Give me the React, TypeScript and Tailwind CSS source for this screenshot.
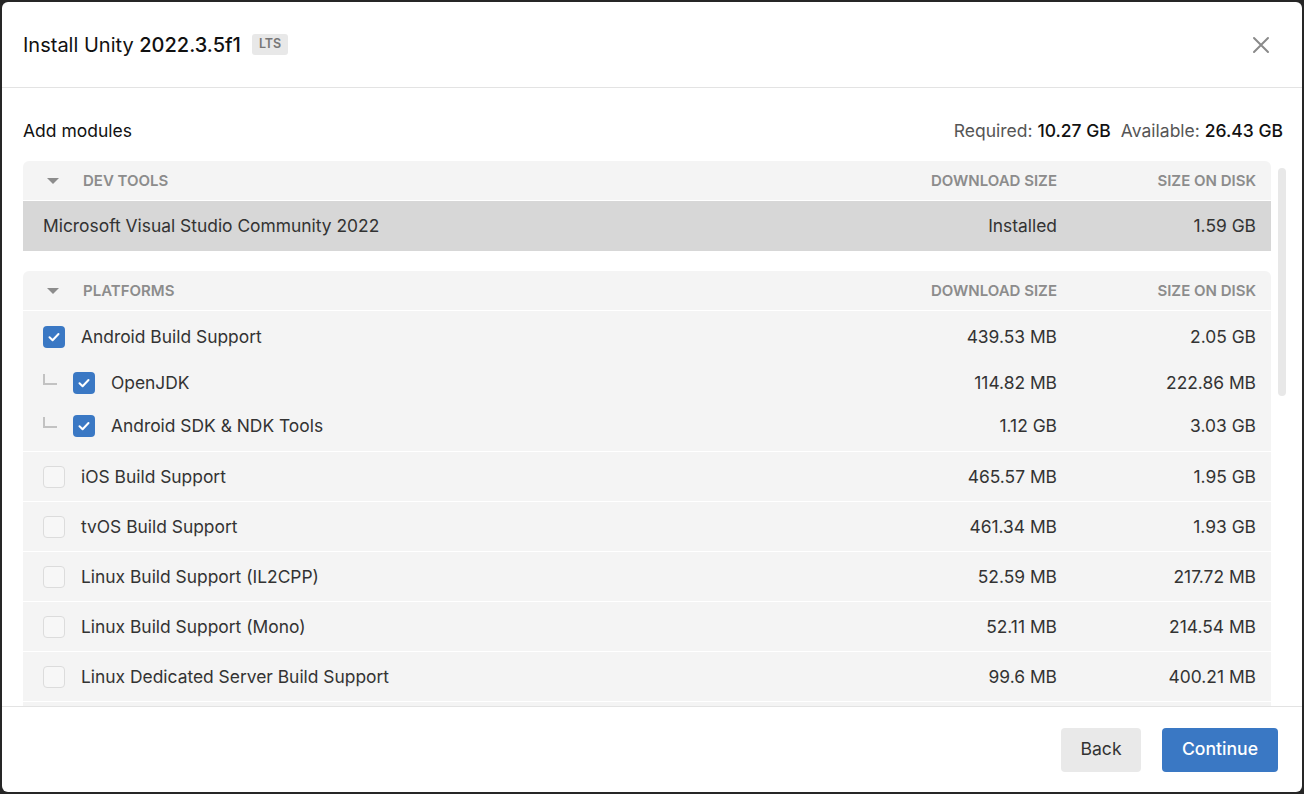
import React from 'react';

type Row = {
	name: string;
	download: string;
	disk: string;
	checked?: boolean;
	children?: { name: string; download: string; disk: string }[];
};

const platforms: Row[] = [
	{
		name: 'Android Build Support',
		download: '439.53 MB',
		disk: '2.05 GB',
		checked: true,
		children: [
			{ name: 'OpenJDK', download: '114.82 MB', disk: '222.86 MB' },
			{ name: 'Android SDK & NDK Tools', download: '1.12 GB', disk: '3.03 GB' },
		],
	},
	{ name: 'iOS Build Support', download: '465.57 MB', disk: '1.95 GB' },
	{ name: 'tvOS Build Support', download: '461.34 MB', disk: '1.93 GB' },
	{ name: 'Linux Build Support (IL2CPP)', download: '52.59 MB', disk: '217.72 MB' },
	{ name: 'Linux Build Support (Mono)', download: '52.11 MB', disk: '214.54 MB' },
	{ name: 'Linux Dedicated Server Build Support', download: '99.6 MB', disk: '400.21 MB' },
];

const Checkbox = ({ checked }: { checked?: boolean }) =>
	checked ? (
		<span className="flex h-[22px] w-[22px] shrink-0 items-center justify-center rounded-[4px] bg-[#3a78c4]">
			<svg width="14" height="14" viewBox="0 0 14 14" fill="none">
				<path d="M2.5 7.3 5.6 10.2 11.5 4" stroke="white" strokeWidth="2" strokeLinecap="round" strokeLinejoin="round" />
			</svg>
		</span>
	) : (
		<span className="block h-[22px] w-[22px] shrink-0 rounded-[4px] border border-[#dcdcdc] bg-[#f7f7f7]" />
	);

const SectionHeader = ({ title }: { title: string }) => (
	<div className="flex h-[40px] items-center border-b border-white pr-[15px] text-[15px] font-semibold uppercase text-[#8c8c8c]">
		<span className="ml-[24px] mr-[24px] block h-0 w-0 border-x-[6px] border-t-[6px] border-x-transparent border-t-[#8c8c8c]" />
		<span className="flex-1">{title}</span>
		<span className="w-[200px] text-right">Download size</span>
		<span className="w-[199px] text-right">Size on disk</span>
	</div>
);

const Sizes = ({ download, disk }: { download: string; disk: string }) => (
	<>
		<span className="w-[200px] text-right">{download}</span>
		<span className="w-[199px] text-right">{disk}</span>
	</>
);

export default function App() {
	return (
		<div className="h-[794px] w-full bg-[#262626] p-[2px] font-['Inter',sans-serif] text-[#333]">
			<div className="flex h-full flex-col overflow-hidden rounded-[6px] bg-white">
				<div className="flex h-[86px] shrink-0 items-center border-b border-[#e3e3e3] pl-[21px] pr-[32px]">
					<h1 className="text-[20px] text-[#111]">
						Install Unity <span className="font-medium">2022.3.5f1</span>
					</h1>
					<span className="ml-[11px] rounded-[3px] bg-[#e8e8e8] px-[7px] py-[1px] text-[12.5px] font-semibold text-[#777]">
						LTS
					</span>
					<span className="flex-1" />
					<svg width="18" height="18" viewBox="0 0 18 18" fill="none">
						<path d="M2 2 16 16 M16 2 2 16" stroke="#8a8a8a" strokeWidth="2" strokeLinecap="round" />
					</svg>
				</div>

				<div className="flex min-h-0 flex-1 flex-col overflow-hidden">
					<div className="flex shrink-0 items-center justify-between pl-[21px] pr-[19px] pt-[30px] text-[17.5px]">
						<span className="text-[#111]">Add modules</span>
						<span className="text-[#555]">
							Required: <span className="font-medium text-[#111]">10.27 GB</span>
							<span className="ml-[10px]">Available: </span>
							<span className="font-medium text-[#111]">26.43 GB</span>
						</span>
					</div>

					<div className="mt-[17px] flex min-h-0 flex-1 gap-[7px] pl-[21px] pr-[16px]">
						<div className="flex min-w-0 flex-1 flex-col gap-[20px] text-[17.4px]">
							<div className="shrink-0 overflow-hidden rounded-t-[6px] bg-[#f4f4f4]">
								<SectionHeader title="Dev tools" />
								<div className="flex h-[50px] items-center bg-[#d7d7d7] pl-[20px] pr-[15px]">
									<span className="flex-1">Microsoft Visual Studio Community 2022</span>
									<Sizes download="Installed" disk="1.59 GB" />
								</div>
							</div>

							<div className="shrink-0 rounded-t-[6px] bg-[#f4f4f4]">
								<SectionHeader title="Platforms" />
								{platforms.map((p) => (
									<div key={p.name} className={`border-b border-white ${p.children ? 'pb-[4px] pt-[2px]' : ''}`}>
										<div className={`flex items-center pl-[20px] pr-[15px] ${p.children ? 'h-[48px]' : 'h-[49px]'}`}>
											<Checkbox checked={p.checked} />
											<span className="ml-[16px] flex-1">{p.name}</span>
											<Sizes download={p.download} disk={p.disk} />
										</div>
										{p.children?.map((c) => (
											<div key={c.name} className="flex h-[43px] items-center pl-[20px] pr-[15px]">
												<span className="mb-[6px] mr-[16px] block h-[11px] w-[14px] border-b-2 border-l-2 border-[#c2c2c2]" />
												<Checkbox checked />
												<span className="ml-[16px] flex-1">{c.name}</span>
												<Sizes download={c.download} disk={c.disk} />
											</div>
										))}
									</div>
								))}
								<div className="h-[40px]" />
							</div>
						</div>
						<div className="w-[8px] shrink-0 pt-[7px]">
							<div className="h-[228px] rounded-full bg-[#e8e8e8]" />
						</div>
					</div>
				</div>

				<div className="flex h-[86px] shrink-0 items-center justify-end gap-[21px] border-t border-[#e3e3e3] pr-[24px] text-[17.6px]">
					<button className="h-[44px] w-[80px] rounded-[4px] bg-[#e9e9e9] text-[#333]">Back</button>
					<button className="h-[44px] w-[116px] rounded-[4px] bg-[#3a78c4] font-medium text-white">Continue</button>
				</div>
			</div>
		</div>
	);
}
